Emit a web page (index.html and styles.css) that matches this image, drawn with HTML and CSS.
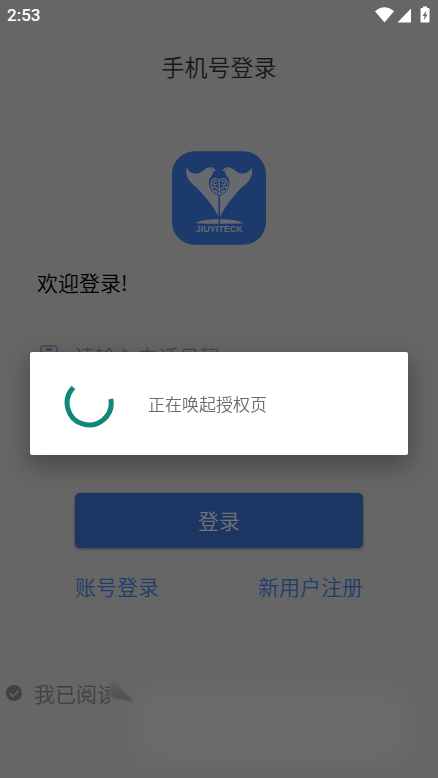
FILE: index.html
```html
<!DOCTYPE html>
<html lang="zh-CN">
<head>
<meta charset="utf-8">
<meta name="viewport" content="width=device-width, initial-scale=1">
<title>手机号登录</title>
<link rel="stylesheet" href="styles.css">
</head>
<body>
<div class="status">
  <span class="clock">2:53</span>
  <svg class="status-icons" viewBox="0 0 56 18" aria-hidden="true">
    <path d="M0 5.200Q9.500-2.500 19 5.200L9.500 16.500Z"/>
    <path d="M36 2.500V16.500H22.500Z"/>
    <path fill-rule="evenodd" d="M48 1.500V.5h4v1.500h1.500a1 1 0 0 1 1 1V15.500a1 1 0 0 1-1 1h-7a1 1 0 0 1-1-1V3a1 1 0 0 1 1-1H48ZM51.500 4.500L47.500 10h2.200L48.700 14.200L52.700 8.500H50.500Z"/>
  </svg>
</div>
<main class="page">
  <h1 class="title">手机号登录</h1>
  <svg class="logo" viewBox="36 33 282 280" role="img" aria-label="JIUYITECK">
    <rect class="logo-tile" x="36" y="33" width="282" height="280" rx="68"/>
    <path class="logo-mark" d="M80 81C86 97 101 103 118 98C131 92 139 81 151 81C160 80 163 86 168 91L160 93C159 102 155 108 148 116C144 137 151 157 176 166V229C157 192 132 164 108 140C84 122 75 105 80 81Z"/>
    <path class="logo-mark" d="M275 81C269 97 254 103 237 98C224 92 216 81 204 81C195 80 192 86 187 91L195 93C196 102 200 108 207 116C211 137 204 157 180 166V229C199 192 223 164 247 140C271 122 280 105 275 81Z"/>
    <path class="logo-line" d="M178 120C168 110 152 116 153 134C154 149 166 158 178 162C190 158 202 149 203 134C204 116 188 110 178 120ZM178 120V162"/>
    <path class="logo-scroll" d="M172 123C163 120 159 126 160 132C164 136 170 134 171 129M184 123C193 120 197 126 196 132C192 136 186 134 185 129M156 141C166 139 172 141 174 150M200 141C190 139 184 141 182 150M164 149L172 156M192 149L184 156"/>
    <circle class="logo-eye" cx="154" cy="87" r="2"/>
    <circle class="logo-eye" cx="201" cy="87" r="2"/>
    <path class="logo-mark" d="M105 249C125 233 230 233 250 249C230 251 125 251 105 249Z"/>
    <path class="logo-stem" d="M178 164V250"/>
    <text class="logo-name" x="178" y="274" text-anchor="middle">JIUYITECK</text>
  </svg>
  <h2 class="welcome">欢迎登录!</h2>
  <form class="form">
    <div class="field">
      <svg class="field-icon" viewBox="0 0 18 22" aria-hidden="true">
        <rect x="1" y="1" width="16" height="20" rx="3"/>
        <path d="M6 4.500H12"/>
      </svg>
      <input class="phone" type="tel" placeholder="请输入电话号码" aria-label="电话号码">
    </div>
    <button class="submit" type="button">登录</button>
    <nav class="links">
      <a href="#account">账号登录</a>
      <a href="#register">新用户注册</a>
    </nav>
    <div class="terms">
      <label class="agree"><input class="tick" type="checkbox" checked>我已阅读</label>
      <span class="cover"></span>
      <span class="haze"></span>
      <span class="smear"></span>
    </div>
  </form>
</main>
<div class="overlay">
  <div class="dialog" role="dialog" aria-label="正在唤起授权页">
    <svg class="spinner" viewBox="0 0 50 50" aria-hidden="true">
      <path d="M9.500 9A22 22 0 1 0 46.800 20.500"/>
    </svg>
    <p class="message">正在唤起授权页</p>
  </div>
</div>
</body>
</html>
```
FILE: styles.css
```css
* {
  box-sizing: border-box;
}

body {
  margin: 0;
  min-height: 100vh;
  overflow: hidden;
  background: #666;
  color: #4a4a4a;
  font-family: "Noto Sans CJK SC", sans-serif;
  font-size: 21px;
  font-weight: 350;
  line-height: 32px;
}

.status {
  display: flex;
  align-items: center;
  justify-content: space-between;
  height: 30px;
  padding: 0 7px;
  color: #fff;
}

.clock {
  font: 500 17px/30px Roboto, sans-serif;
}

.status-icons {
  width: 56px;
  height: 18px;
  fill: #fff;
}

.page {
  display: flex;
  flex-direction: column;
}

.title {
  margin: 20px 0 0;
  color: #171717;
  font-size: 23px;
  font-weight: 350;
  text-align: center;
}

.logo {
  align-self: center;
  width: 94px;
  height: 94px;
  margin-top: 69px;
}

.logo-tile {
  fill: #1c3a6b;
}

.logo-mark {
  fill: #666a70;
}

.logo-line {
  fill: #1c3a6b;
  stroke: #666a70;
  stroke-width: 4;
}

.logo-scroll {
  fill: none;
  stroke: #666a70;
  stroke-width: 4;
}

.logo-eye {
  fill: #1c3a6b;
}

.logo-stem {
  stroke: #1c3a6b;
  stroke-width: 4;
}

.logo-name {
  fill: #666a70;
  font-family: "Liberation Sans", sans-serif;
  font-size: 27px;
  font-weight: 700;
}

.welcome {
  margin: 21px 37px 0;
  color: #000;
  font-size: 21px;
  font-weight: 350;
}

.form {
  display: flex;
  flex-direction: column;
}

.field {
  display: flex;
  align-items: center;
  gap: 16px;
  margin: 42px 40px 0;
}

.field-icon {
  width: 18px;
  height: 22px;
  fill: none;
  stroke: #4c5056;
  stroke-width: 2;
}

.field-icon path {
  stroke: #1c3a6b;
}

.phone {
  flex: 1;
  min-width: 0;
  height: 32px;
  padding: 0;
  border: 0;
  background: none;
  color: #171717;
  font: inherit;
}

.phone::placeholder {
  color: #474747;
  opacity: 1;
}

.submit {
  height: 55px;
  margin: 121px 75px 0;
  padding: 0 0 2px;
  border: 0;
  border-radius: 5px;
  background: #1c3664;
  box-shadow: 0 1px 3px rgba(0, 0, 0, 0.4);
  color: #707276;
  font: inherit;
}

.links {
  display: flex;
  justify-content: space-between;
  margin: 22px 75px 0;
}

.links a {
  color: #1f3c6d;
  text-decoration: none;
}

.terms {
  position: relative;
  height: 106px;
  margin-top: 75px;
  padding-left: 6px;
}

.agree {
  display: flex;
  align-items: center;
  gap: 12px;
  color: #404040;
  white-space: nowrap;
}

.tick {
  display: grid;
  flex: none;
  place-items: center;
  width: 16px;
  height: 16px;
  margin: 0;
  border-radius: 50%;
  appearance: none;
  background: #424242;
}

.tick::after {
  width: 7px;
  height: 4px;
  margin-bottom: 2px;
  border-bottom: 1px solid #747474;
  border-left: 1px solid #747474;
  content: "";
  transform: rotate(-45deg);
}

.cover {
  position: absolute;
  top: 0;
  left: 110px;
  width: 20px;
  height: 32px;
  background: #666;
}

.haze {
  position: absolute;
  top: 12px;
  right: 30px;
  bottom: 20px;
  left: 135px;
  background: #6b6b6b;
  filter: blur(14px);
}

.smear {
  position: absolute;
  top: 5px;
  left: 110px;
  width: 24px;
  height: 24px;
  overflow: hidden;
  filter: blur(1px);
}

.smear::before {
  position: absolute;
  inset: 0 0 4px;
  background: linear-gradient(to bottom, #5e5e5e, #4e4e4e);
  clip-path: polygon(0 0, 25% 5%, 100% 100%, 0 75%);
  content: "";
}

.overlay {
  position: fixed;
  inset: 0;
  display: flex;
  align-items: center;
  justify-content: center;
  padding: 29px 30px 0;
}

.dialog {
  display: flex;
  flex: 1;
  align-items: center;
  gap: 34px;
  padding: 26px 34px;
  border-radius: 2px;
  background: #fff;
  box-shadow: 0 9px 24px 2px rgba(0, 0, 0, 0.3);
}

.spinner {
  width: 50px;
  height: 51px;
  fill: none;
  stroke: #11877a;
  stroke-width: 5;
}

.message {
  margin: 0;
  color: #6c6c6c;
  font-size: 17px;
}
```
